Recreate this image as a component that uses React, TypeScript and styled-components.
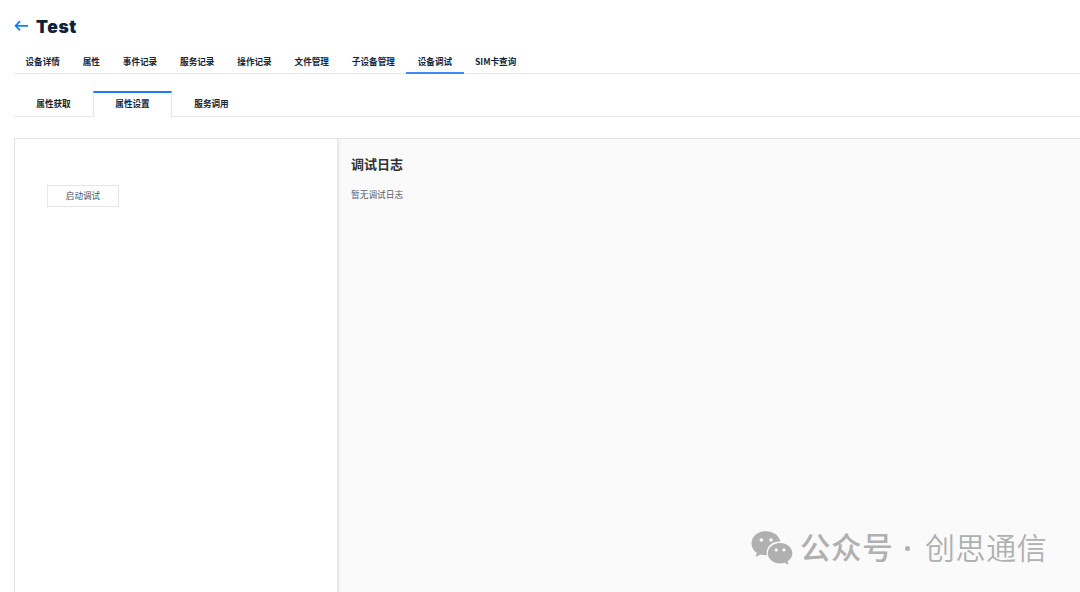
import { useState } from 'react';
import styled, { createGlobalStyle, css } from 'styled-components';

const mainTabs = [
  '设备详情',
  '属性',
  '事件记录',
  '服务记录',
  '操作记录',
  '文件管理',
  '子设备管理',
  '设备调试',
  'SIM卡查询',
];

const debugTabs = ['属性获取', '属性设置', '服务调用'];

/* ── Styled Components ── */

const GlobalStyle = createGlobalStyle`
  * {
    box-sizing: border-box;
  }

  body {
    margin: 0;
    background: #fff;
    color: #12263c;
    font-family: 'Noto Sans CJK SC', sans-serif;
    overflow: hidden;
  }
`;

const Page = styled.div`
  display: flex;
  flex-direction: column;
  height: 100vh;
  padding-left: 14px;
`;

const Header = styled.header`
  display: flex;
  align-items: center;
  height: 52px;
  flex-shrink: 0;
`;

const BackBtn = styled.button`
  display: flex;
  width: 14px;
  margin-right: 8px;
  padding: 0;
  border: none;
  background: none;
  cursor: pointer;
`;

const Title = styled.h1`
  margin: 2px 0 0;
  color: #0b2239;
  font-family: Inter, sans-serif;
  font-size: 17.5px;
  font-weight: 900;
  line-height: 24px;
  letter-spacing: 0.6px;
`;

const tabBase = css`
  border: none;
  background: none;
  color: inherit;
  font-family: inherit;
  font-size: 8.6px;
  font-weight: 700;
  white-space: nowrap;
  cursor: pointer;
`;

const MainTabBar = styled.nav`
  display: flex;
  height: 22px;
  flex-shrink: 0;
  border-bottom: 1px solid #e8e9eb;
`;

const MainTab = styled.button<{ $active: boolean }>`
  ${tabBase}
  height: 22px;
  padding: 0 11.45px 4px;
  line-height: 18px;
  box-shadow: ${({ $active }) => ($active ? 'inset 0 -2px #3d8bf8' : 'none')};
`;

const SubTabBar = styled.nav`
  display: flex;
  height: 26px;
  margin-top: 17px;
  flex-shrink: 0;
  border-bottom: 1px solid #e8e9eb;
`;

const SubTab = styled.button<{ $active: boolean }>`
  ${tabBase}
  width: 79px;
  height: 26px;
  padding: 0 0 2px;
  line-height: 22px;

  ${({ $active }) =>
    $active &&
    css`
      padding-bottom: 4px;
      background: #fff;
      border: 1px solid #e3e5e8;
      border-top: 2px solid #1f7bf0;
      border-bottom: none;
      line-height: 20px;
    `}
`;

const Workspace = styled.main`
  display: flex;
  flex: 1;
  margin-top: 21px;
  border-top: 1px solid #e2e3e4;
  border-left: 1px solid #e2e3e4;
`;

const ControlPane = styled.section`
  width: 323px;
  padding: 46px 32px;
  flex-shrink: 0;
  border-right: 1px solid #e2e3e4;
`;

const StartBtn = styled.button`
  display: block;
  width: 72px;
  height: 22px;
  padding: 0 0 2px;
  border: 1px solid #e5e6e8;
  background: #fff;
  color: #47515f;
  font-family: inherit;
  font-size: 8.6px;
  line-height: 18px;
  cursor: pointer;
`;

const LogPane = styled.section`
  flex: 1;
  padding: 15px 13px;
  background: #fafafa;
  box-shadow: inset 3px 0 3px -2px rgba(0, 0, 0, 0.08);
`;

const LogTitle = styled.h2`
  margin: 0;
  color: #303236;
  font-size: 13px;
  font-weight: 700;
  line-height: 20px;
`;

const LogEmpty = styled.p`
  margin: 14px 0 0;
  color: #566170;
  font-size: 8.7px;
  line-height: 13px;
`;

const Watermark = styled.div`
  position: absolute;
  left: 751px;
  top: 526px;
  display: flex;
  align-items: center;
  height: 44px;
  color: #b0b0b0;
  font-size: 30px;
  line-height: 44px;
  letter-spacing: 0.6px;
  white-space: nowrap;
  pointer-events: none;
`;

const WatermarkLabel = styled.span`
  width: 94px;
  margin: -4px 0 0 7px;
  font-size: 30.5px;
  font-weight: 500;
`;

const Dot = styled.span`
  width: 5px;
  height: 5px;
  margin: 1px 15px 0 11px;
  border-radius: 50%;
  background: currentColor;
`;

const WatermarkName = styled.span`
  margin-top: -4px;
  font-weight: 350;
`;

/* ── Icons ── */

function BackIcon() {
  return (
    <svg width="14" height="12" viewBox="0 0 14 12" fill="none" stroke="#0f7bff" strokeWidth="1.7">
      <path d="M6 1.2 1.6 5.8 6 10.4M1.6 5.8H14" />
    </svg>
  );
}

function WechatIcon() {
  return (
    <svg width="42" height="35" viewBox="0 0 42 35" fill="currentColor">
      <path d="M15 .2C6.900.2.5 5.600.5 12.400c0 3.900 2 7.200 5.300 9.400L4.500 25.900l5-2.500c1.900.6 3.500.9 5.500.9h1.100a10 10 0 0 1-.4-2.900c0-6.100 5.500-11 12.500-11h1.200C28 4.400 22.100.2 15 .2Z" />
      <path d="M41.400 22.200c0-5.700-5.600-10.300-12.200-10.300S16.800 16.500 16.800 22.200 22.500 32.500 29.200 32.500c1.500 0 3-.3 4.400-.7l4 2.200-1.100-3.700c3-2 4.900-4.900 4.900-8.100Z" />
      <g fill="#fafafa">
        <circle cx="10.300" cy="9" r="1.800" />
        <circle cx="20" cy="9" r="1.800" />
        <circle cx="25.200" cy="18.900" r="1.600" />
        <circle cx="33" cy="18.900" r="1.600" />
      </g>
    </svg>
  );
}

/* ── Component ── */

function App() {
  const [mainTab, setMainTab] = useState('设备调试');
  const [debugTab, setDebugTab] = useState('属性设置');

  return (
    <>
      <GlobalStyle />
      <Page>
        <Header>
          <BackBtn type="button" aria-label="Back">
            <BackIcon />
          </BackBtn>
          <Title>Test</Title>
        </Header>

        <MainTabBar>
          {mainTabs.map((tab) => (
            <MainTab
              key={tab}
              type="button"
              $active={tab === mainTab}
              onClick={() => setMainTab(tab)}
            >
              {tab}
            </MainTab>
          ))}
        </MainTabBar>

        <SubTabBar>
          {debugTabs.map((tab) => (
            <SubTab
              key={tab}
              type="button"
              $active={tab === debugTab}
              onClick={() => setDebugTab(tab)}
            >
              {tab}
            </SubTab>
          ))}
        </SubTabBar>

        <Workspace>
          <ControlPane>
            <StartBtn type="button">启动调试</StartBtn>
          </ControlPane>
          <LogPane>
            <LogTitle>调试日志</LogTitle>
            <LogEmpty>暂无调试日志</LogEmpty>
          </LogPane>
        </Workspace>
      </Page>

      <Watermark>
        <WechatIcon />
        <WatermarkLabel>公众号</WatermarkLabel>
        <Dot />
        <WatermarkName>创思通信</WatermarkName>
      </Watermark>
    </>
  );
}

export default App;
